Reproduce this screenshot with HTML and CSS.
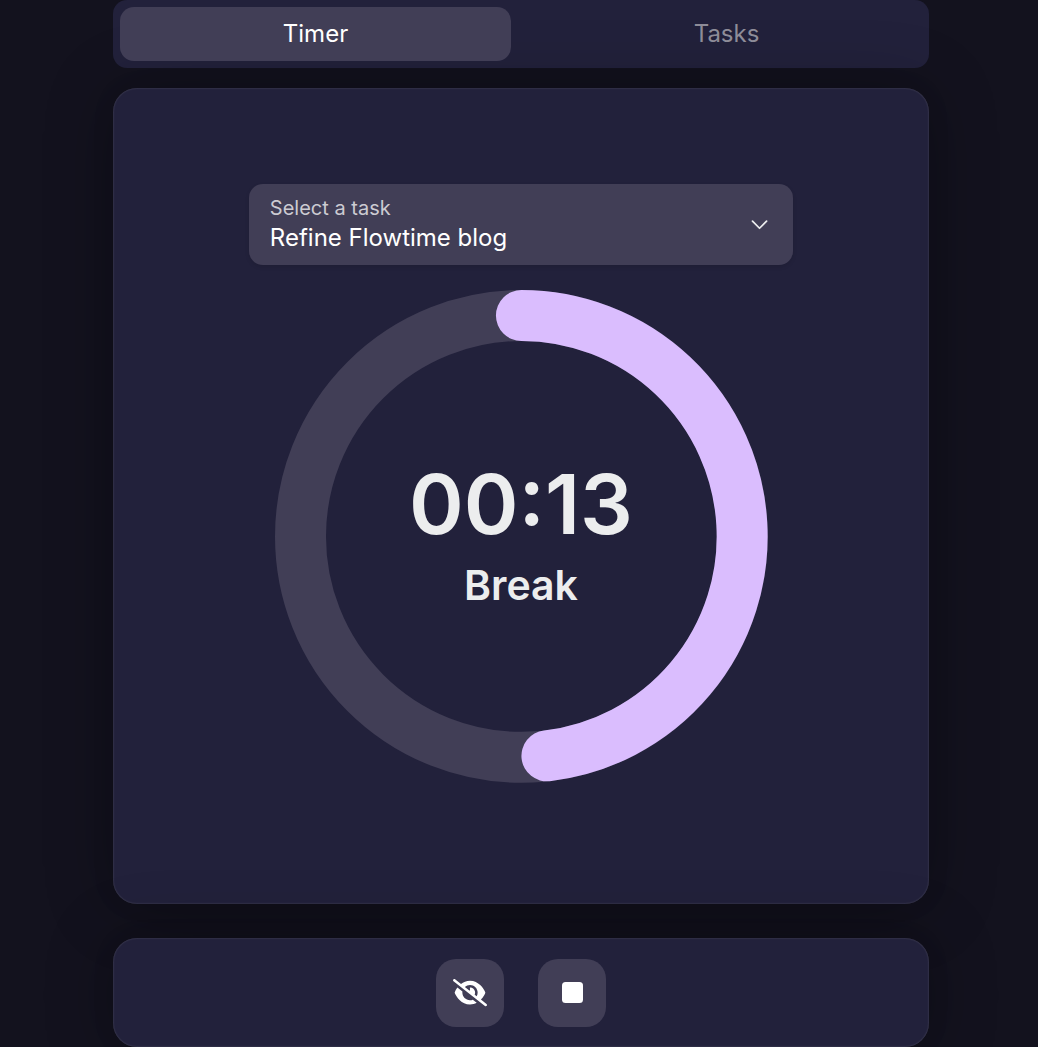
FILE: index.html
```html
<!DOCTYPE html>
<html lang="en">
<head>
  <meta charset="utf-8">
  <meta name="viewport" content="width=device-width, initial-scale=1">
  <title>Flowtime</title>
  <link rel="stylesheet" href="styles.css">
</head>
<body>
  <div class="app">
    <main class="column">
      <div class="tabs" role="tablist">
        <button class="tab tab-active" type="button" role="tab" aria-selected="true">Timer</button>
        <button class="tab" type="button" role="tab" aria-selected="false">Tasks</button>
      </div>

      <section class="card timer">
        <div class="field">
          <label class="field-label" for="task">Select a task</label>
          <select class="field-select" id="task">
            <option>Refine Flowtime blog</option>
          </select>
          <svg class="field-chevron" viewBox="0 0 24 24" aria-hidden="true"><path d="m6 8.500 6.500 6.500 6.500-6.500"/></svg>
        </div>

        <div class="ring">
          <svg class="ring-svg" viewBox="0 0 493 493" aria-hidden="true">
            <circle class="ring-track" cx="246.5" cy="246.5" r="221"/>
            <path class="ring-value" d="M246.5 25.5A221 221 0 0 1 272 466"/>
          </svg>
          <div class="ring-text">
            <p class="time">00:13</p>
            <p class="phase">Break</p>
          </div>
        </div>
      </section>

      <section class="card controls">
        <button class="icon-button" type="button" aria-label="Hide timer">
          <svg class="icon-eye" viewBox="0 0 640 512" aria-hidden="true"><path d="M38.8 5.1C28.4-3.1 13.3-1.2 5.1 9.2S-1.2 34.7 9.2 42.9l592 464c10.4 8.2 25.5 6.3 33.7-4.1s6.3-25.5-4.1-33.7L525.6 386.7c39.6-40.6 66.4-86.1 79.9-118.4c3.3-7.9 3.3-16.7 0-24.6c-14.9-35.7-46.2-87.7-93-131.1C465.5 68.8 400.8 32 320 32c-68.2 0-125 26.3-169.3 60.8L38.8 5.1zM223.1 149.5C248.6 126.2 282.7 112 320 112c79.5 0 144 64.5 144 144c0 24.9-6.3 48.3-17.4 68.7L408 294.5c8.4-19.3 10.6-41.4 4.8-63.3c-11.1-41.5-47.8-69.4-88.6-71.1c-5.8-.2-9.2 6.1-7.4 11.7c2.1 6.4 3.3 13.2 3.3 20.3c0 10.2-2.4 19.8-6.6 28.3l-90.3-70.8zM373 389.9c-16.4 6.5-34.3 10.1-53 10.1c-79.5 0-144-64.5-144-144c0-6.9 .5-13.6 1.4-20.2L83.1 161.5C60.3 191.2 44 220.8 34.5 243.7c-3.3 7.9-3.3 16.7 0 24.6c14.9 35.7 46.2 87.7 93 131.1C174.5 443.2 239.2 480 320 480c47.8 0 89.9-12.9 126.2-32.5L373 389.9z"/></svg>
        </button>
        <button class="icon-button" type="button" aria-label="Stop">
          <svg class="icon-stop" viewBox="0 0 22 22" aria-hidden="true"><rect x="1" width="21" height="21" rx="3.5"/></svg>
        </button>
      </section>
    </main>
  </div>
</body>
</html>
```

FILE: styles.css
```css
* {
  box-sizing: border-box;
}

body {
  margin: 0;
  background: #fff;
  color: #ecedee;
  font-family: Inter, "Liberation Sans", sans-serif;
}

button,
select {
  border: 0;
  font: inherit;
  color: inherit;
}

p {
  margin: 0;
}

.app {
  margin: 0 7px 9px 0;
  padding: 0 109px 0 113px;
  background: #13121e;
  overflow: hidden;
}

.column {
  max-width: 816px;
  margin: 0 auto;
}

.tabs {
  display: flex;
  gap: 20px;
  padding: 7px;
  border-radius: 14px;
  background: #22213b;
}

.tab {
  flex: 1;
  height: 54px;
  padding: 0 0 2px;
  border-radius: 14px;
  background: none;
  color: #8e8c98;
  font-size: 24px;
}

.tab-active {
  background: #413e56;
  color: #fff;
}

.card {
  border-radius: 24px;
  background: #22213b;
  box-shadow:
    0 0 26px rgb(0 0 0 / 0.06),
    0 3px 68px rgb(0 0 0 / 0.28),
    inset 0 0 2px rgb(255 255 255 / 0.22);
}

.timer {
  display: flex;
  flex-direction: column;
  align-items: center;
  gap: 25px;
  aspect-ratio: 1;
  margin-top: 20px;
  padding-top: 96px;
}

.field {
  position: relative;
  width: 66.7%;
}

.field-label {
  position: absolute;
  top: 12px;
  left: 21px;
  color: #cccbd2;
  font-size: 20px;
  line-height: 24px;
}

.field-select {
  display: block;
  width: 100%;
  height: 81px;
  padding: 26px 60px 0 21px;
  border-radius: 14px;
  background: #413e56;
  box-shadow: 0 2px 4px rgb(0 0 0 / 0.1);
  color: #fff;
  font-size: 24px;
  appearance: none;
}

.field-chevron {
  position: absolute;
  top: 28px;
  right: 21px;
  width: 26px;
  height: 26px;
  fill: none;
  stroke: #ecedee;
  stroke-width: 1.6;
  stroke-linecap: round;
  stroke-linejoin: round;
  pointer-events: none;
}

.ring {
  display: grid;
  place-items: center;
  width: 60.4%;
}

.ring-svg,
.ring-text {
  grid-area: 1 / 1;
}

.ring-svg {
  display: block;
  width: 100%;
  overflow: visible;
}

.ring-track,
.ring-value {
  fill: none;
  stroke-width: 51;
}

.ring-track {
  stroke: #413e56;
}

.ring-value {
  stroke: #dabdfe;
  stroke-linecap: round;
}

.ring-text {
  padding-top: 6px;
  font-weight: 600;
  text-align: center;
}

.time {
  font-size: 83px;
  line-height: 82px;
}

.phase {
  font-size: 41px;
  line-height: 61px;
  margin-top: 10px;
}

.controls {
  display: flex;
  justify-content: center;
  gap: 34px;
  margin-top: 34px;
  padding: 21px 20px 20px;
}

.icon-button {
  display: grid;
  place-items: center;
  width: 68px;
  height: 68px;
  padding: 0;
  border-radius: 20px;
  background: #413e56;
  fill: #fff;
}

.icon-eye {
  width: 34px;
}

.icon-stop {
  width: 22px;
}
```
